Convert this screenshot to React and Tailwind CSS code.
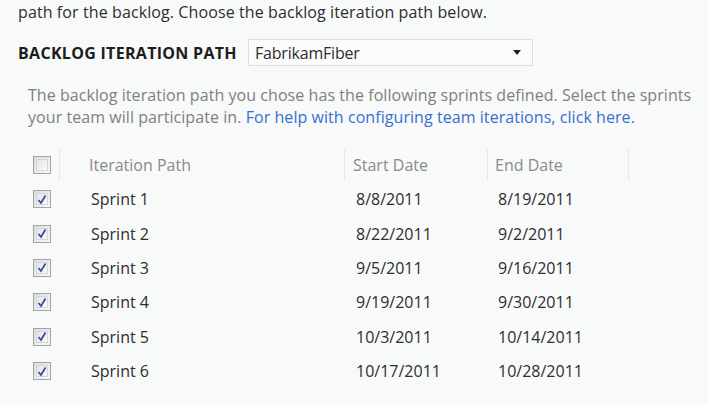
const sprints = [
  ["Sprint 1", "8/8/2011", "8/19/2011"],
  ["Sprint 2", "8/22/2011", "9/2/2011"],
  ["Sprint 3", "9/5/2011", "9/16/2011"],
  ["Sprint 4", "9/19/2011", "9/30/2011"],
  ["Sprint 5", "10/3/2011", "10/14/2011"],
  ["Sprint 6", "10/17/2011", "10/28/2011"],
];

function Box({ checked }) {
  return (
    <span className="flex h-[18px] w-[18px] shrink-0 items-center justify-center border border-[#a3a3a3] bg-gradient-to-br from-[#dcdcdc] to-[#fafafa] p-[2px]">
      <span className="flex h-full w-full items-center justify-center border border-[#d6d6d6] bg-gradient-to-br from-[#e4e4e4] to-[#fbfbfb]">
        {checked && (
          <svg viewBox="0 0 10 10" className="h-[11px] w-[11px]">
            <path d="M1.5 5.5 L4 8.5 L8.5 1" fill="none" stroke="#33509e" strokeWidth="1.8" />
          </svg>
        )}
      </span>
    </span>
  );
}

export default function App() {
  return (
    <div className="h-[405px] w-[708px] overflow-hidden bg-[#f8f9f9] font-['Open_Sans',sans-serif] text-[16px] text-[#2e2e2e]">
      <p className="pl-[18px] leading-[24px] tracking-[0.1px]">
        path for the backlog. Choose the backlog iteration path below.
      </p>
      <div className="mt-[15px] flex items-center pl-[18px]">
        <span className="w-[230px] font-bold tracking-[0.3px] text-[#1c1c1c]">BACKLOG ITERATION PATH</span>
        <div className="flex h-[27px] w-[285px] items-center justify-between border border-[#dedede] bg-[#fbfbfb] pl-[6px] pr-[11px]">
          <span className="tracking-[-0.2px]">FabrikamFiber</span>
          <svg viewBox="0 0 8 5" className="h-[5px] w-[8px]">
            <path d="M0 0 H8 L4 5 Z" fill="#222" />
          </svg>
        </div>
      </div>
      <p className="mt-[18px] pl-[28px] pr-[4px] leading-[22px] tracking-[0.06px] text-[#808080]">
        The backlog iteration path you chose has the following sprints defined. Select the sprints your team will participate in.{" "}
        <span className="text-[#3a6fd1]">For help with configuring team iterations, click here.</span>
      </p>
      <div className="mt-[19px] pl-[33px]">
        <div className="flex h-[35px] items-center text-[#8a8a8a]">
          <Box />
          <span className="ml-[8px] h-[32px] w-px bg-[#e6e6e6]" />
          <span className="w-[284px] pl-[29px]">Iteration Path</span>
          <span className="h-[32px] w-px bg-[#e6e6e6]" />
          <span className="w-[142px] pl-[8px]">Start Date</span>
          <span className="h-[32px] w-px bg-[#e6e6e6]" />
          <span className="w-[140px] pl-[7px]">End Date</span>
          <span className="h-[32px] w-px bg-[#e6e6e6]" />
        </div>
        {sprints.map(([name, start, end]) => (
          <div key={name} className="flex h-[34.4px] items-center">
            <Box checked />
            <span className="w-[305px] pl-[40px]">{name}</span>
            <span className="w-[142px]">{start}</span>
            <span>{end}</span>
          </div>
        ))}
      </div>
    </div>
  );
}
